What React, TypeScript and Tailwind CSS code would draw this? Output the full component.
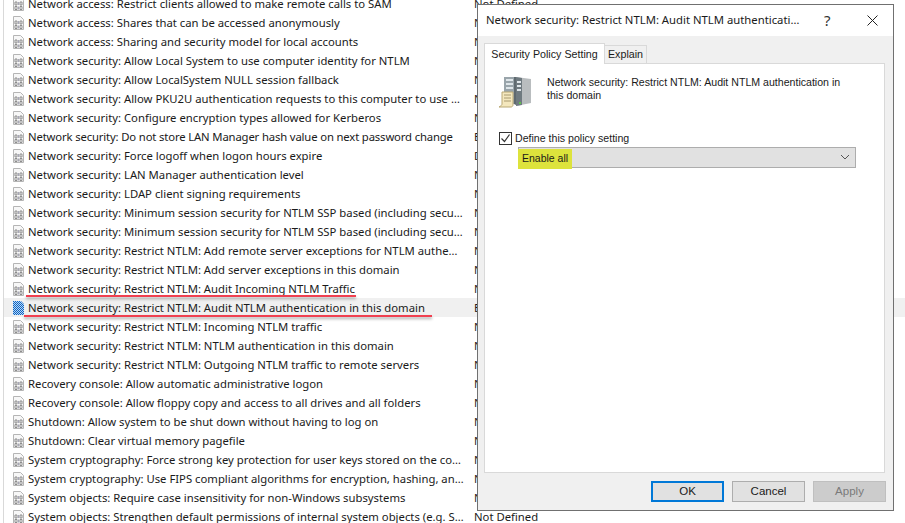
const names: string[] = [
  "Network access: Restrict clients allowed to make remote calls to SAM",
  "Network access: Shares that can be accessed anonymously",
  "Network access: Sharing and security model for local accounts",
  "Network security: Allow Local System to use computer identity for NTLM",
  "Network security: Allow LocalSystem NULL session fallback",
  "Network security: Allow PKU2U authentication requests to this computer to use online identities",
  "Network security: Configure encryption types allowed for Kerberos",
  "Network security: Do not store LAN Manager hash value on next password change",
  "Network security: Force logoff when logon hours expire",
  "Network security: LAN Manager authentication level",
  "Network security: LDAP client signing requirements",
  "Network security: Minimum session security for NTLM SSP based (including secure RPC) clients",
  "Network security: Minimum session security for NTLM SSP based (including secure RPC) servers",
  "Network security: Restrict NTLM: Add remote server exceptions for NTLM authentication",
  "Network security: Restrict NTLM: Add server exceptions in this domain",
  "Network security: Restrict NTLM: Audit Incoming NTLM Traffic",
  "Network security: Restrict NTLM: Audit NTLM authentication in this domain",
  "Network security: Restrict NTLM: Incoming NTLM traffic",
  "Network security: Restrict NTLM: NTLM authentication in this domain",
  "Network security: Restrict NTLM: Outgoing NTLM traffic to remote servers",
  "Recovery console: Allow automatic administrative logon",
  "Recovery console: Allow floppy copy and access to all drives and all folders",
  "Shutdown: Allow system to be shut down without having to log on",
  "Shutdown: Clear virtual memory pagefile",
  "System cryptography: Force strong key protection for user keys stored on the computer",
  "System cryptography: Use FIPS compliant algorithms for encryption, hashing, and signing",
  "System objects: Require case insensitivity for non-Windows subsystems",
  "System objects: Strengthen default permissions of internal system objects (e.g. Symbolic Links)",
];

function valueFor(i: number) {
  if (i === 7) return "Enabled";
  if (i === 8) return "Disabled";
  if (i === 16) return "Enable all";
  return "Not Defined";
}

function PolicyIcon({ selected }: { selected: boolean }) {
  if (selected) {
    return (
      <svg width="13" height="14" viewBox="0 0 13 14" className="shrink-0">
        <defs>
          <pattern id="sel" width="2" height="2" patternUnits="userSpaceOnUse">
            <rect width="2" height="2" fill="#0a64c8" />
            <rect width="1" height="1" fill="#bcd7f0" />
            <rect x="1" y="1" width="1" height="1" fill="#bcd7f0" />
          </pattern>
        </defs>
        <path d="M1 0h8l3 3v11H1z" fill="url(#sel)" />
      </svg>
    );
  }
  return (
    <svg width="13" height="14" viewBox="0 0 13 14" className="shrink-0">
      <path d="M1.5.5h7l3 3v10h-10z" fill="#f7f7f7" stroke="#b5b5b5" />
      <path d="M3 5h2v3H3zM8 5h2v3H8zM3 9.500h2v3H3zM8 9.500h2v3H8z" fill="none" stroke="#8d8d8d" />
      <path d="M6.500 5v3M6.500 9.500v3" stroke="#a8a8b8" />
    </svg>
  );
}

function ServerIcon() {
  return (
    <svg width="33" height="33" viewBox="0 0 33 33">
      <path d="M5 1l10 0v27l-10-1z" fill="#9aa5ab" />
      <path d="M15 1l2 0v28l-2-1z" fill="#5f6a70" />
      <path d="M17 1l15 2v24l-15 3z" fill="#b9bdbf" />
      <path d="M17 1l6 1v27l-6 1z" fill="#6f7a80" />
      <path d="M7 3h7v2H7zM7 7h7v2H7zM7 11h7v2H7zM18 5h4v2h-4zM18 9h4v2h-4zM18 13h4v2h-4z" fill="#dfe6ea" />
      <rect x="20" y="26" width="2" height="2" fill="#5fc04a" />
      <path d="M3 16h11v13c0 1-1 2-2 2H0c2-1 3-2 3-3z" fill="#f4e7bd" stroke="#b9a874" />
      <path d="M5 19h7M5 22h7M5 25h7" stroke="#a89a70" />
    </svg>
  );
}

export default function App() {
  return (
    <div
      className="relative h-[523px] w-[905px] overflow-hidden bg-white text-[11.3px] text-[#1a1a1a]"
      style={{ fontFamily: '"Noto Sans", sans-serif' }}
    >
      <div className="ml-[3px] -mt-[6px] border-l border-[#d9d9d9]">
        {names.map((name, i) => (
          <div key={name} className={`flex h-[19px] items-center pl-[8px] ${i === 16 ? "bg-[#f0f0f0]" : ""}`}>
            <PolicyIcon selected={i === 16} />
            <span className={`ml-[3px] w-[436px] truncate pt-[1px] ${i === 7 ? "tracking-[-0.15px]" : ""}`}>{name}</span>
            <span className="ml-[10px] whitespace-nowrap pt-[1px]">{valueFor(i)}</span>
          </div>
        ))}
      </div>

      {/* red marker lines from the annotated screenshot */}
      <div className="absolute left-[26px] top-[295px] h-[2px] w-[330px] bg-[#f04050] shadow-[0_2px_3px_rgba(0,0,0,0.35)]" />
      <div className="absolute left-[24px] top-[315px] h-[2px] w-[408px] bg-[#f04050] shadow-[0_2px_3px_rgba(0,0,0,0.35)]" />

      {/* properties dialog */}
      <div className="absolute left-[477px] top-[4px] flex h-[507px] w-[417px] flex-col border border-[#707070] bg-[#f0f0f0]">
        <div className="flex h-[31px] shrink-0 items-center bg-white pl-[8px]">
          <span className="w-[320px] truncate">Network security: Restrict NTLM: Audit NTLM authentication in this domain</span>
          <span className="ml-[18px] text-[15px] text-[#333]">?</span>
          <svg width="11" height="11" viewBox="0 0 11 11" className="ml-[36px]">
            <path d="M.5.5l10 10M10.500.5l-10 10" stroke="#222" />
          </svg>
        </div>

        <div className="flex flex-1 flex-col px-[6px] pt-[7px]" style={{ fontFamily: '"Liberation Sans", sans-serif' }}>
          <div className="flex h-[20px] items-end text-[10.7px]">
            <div className="relative z-10 -mb-px flex h-[21px] w-[121px] items-center justify-center border border-b-0 border-[#d9d9d9] bg-white">
              Security Policy Setting
            </div>
            <div className="flex h-[18px] w-[42px] items-center justify-center border border-b-0 border-l-0 border-[#d9d9d9] bg-[#f0f0f0]">
              Explain
            </div>
          </div>

          <div className="h-[410px] w-[401px] border border-[#d9d9d9] bg-white pl-[14px] pt-[12px] text-[10.6px]">
            <div className="flex">
              <ServerIcon />
              <p className="ml-[15px] w-[310px] leading-[13px]">
                Network security: Restrict NTLM: Audit NTLM authentication in this domain
              </p>
            </div>
            <label className="mt-[22px] flex items-center">
              <span className="flex h-[13px] w-[13px] items-center justify-center border border-[#333] bg-white">
                <svg width="11" height="11" viewBox="0 0 11 11">
                  <path d="M1.500 5.500l3 3 5-7" fill="none" stroke="#333" strokeWidth="1.200" />
                </svg>
              </span>
              <span className="ml-[3px]">Define this policy setting</span>
            </label>
            <div className="ml-[19px] flex h-[21px] w-[338px] border border-[#adadad] bg-[#e1e1e1] pr-[5px]">
              <span className="mt-[1px] -ml-px flex h-[20px] w-[54px] shrink-0 items-center whitespace-nowrap bg-[#dde33c] pl-[4px] text-[10.5px]">
                Enable all
              </span>
              <svg width="10" height="6" viewBox="0 0 10 6" className="ml-auto self-center">
                <path d="M1 1l4 4 4-4" fill="none" stroke="#555" />
              </svg>
            </div>
          </div>

          <div className="mt-[8px] flex justify-end gap-[8px] pr-[1px] text-[11.5px]">
            <button className="h-[21px] w-[73px] border-2 border-[#0078d7] bg-[#e1e1e1]">OK</button>
            <button className="h-[21px] w-[73px] border border-[#adadad] bg-[#e1e1e1]">Cancel</button>
            <button className="h-[21px] w-[73px] border border-[#bfbfbf] bg-[#cccccc] text-[#7a7a7a]">Apply</button>
          </div>
        </div>
      </div>
    </div>
  );
}
